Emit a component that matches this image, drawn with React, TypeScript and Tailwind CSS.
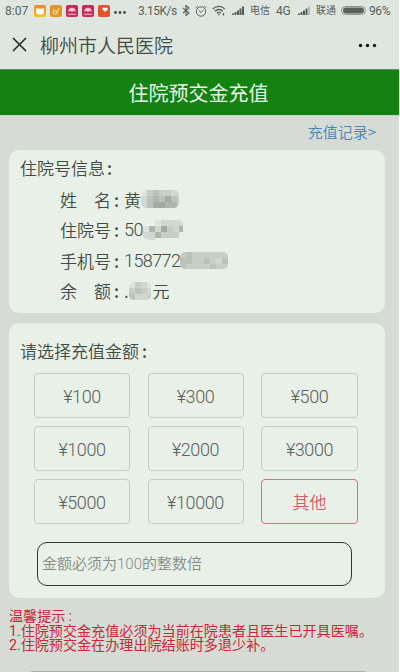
import type { ReactNode } from "react"

const amounts = ["¥100", "¥300", "¥500", "¥1000", "¥2000", "¥3000", "¥5000", "¥10000", "其他"]

// opacity of every mosaic cell, one string per row, 0 = clear
const masks = {
  name: { cells: ["1343322", "2454643", "2466553", "1343332"], size: 6, w: 38, h: 18 },
  number: { cells: ["0012222", "1526325", "2253330", "1200000"], size: 6, w: 40, h: 20 },
  phone: { cells: ["34333333", "44334324", "43333433"], size: 6, w: 48, h: 17 },
  balance: { cells: ["1321", "3432", "4223"], size: 6, w: 22, h: 18 },
}

function Mosaic({ kind }: { kind: keyof typeof masks }) {
  const { cells, size, w, h } = masks[kind]
  return (
    <svg width={w} height={h} className="rounded-[5px] shrink-0">
      {cells.flatMap((row, y) =>
        row.split("").map((c, x) => (
          <rect key={`${x}-${y}`} x={x * size} y={y * size} width={size} height={size} fill="#667169" opacity={Number(c) * 0.09} />
        ))
      )}
    </svg>
  )
}

function AppIcon({ className, children }: { className: string; children: ReactNode }) {
  return (
    <span className={`w-[12px] h-[12px] rounded-[2px] ${className}`}>
      <svg viewBox="0 0 11 11" width="12" height="12" fill="#fff">{children}</svg>
    </span>
  )
}

function Signal({ last }: { last: string }) {
  return (
    <svg width="12" height="9" viewBox="0 0 12 9" fill="#58605a">
      <path d="M0 7.500h2V9H0zM2.500 6h2v3h-2zM5 4.500h2V9H5zM7.500 2.500h2V9h-2z" />
      <path d="M10 .5h2V9h-2z" fill={last} />
    </svg>
  )
}

function StatusBar() {
  return (
    <div className="h-5 pt-px flex items-center text-[12px] text-[#59615b] leading-5">
      <span className="ml-[5px] w-[29px]">8:07</span>
      <div className="flex items-center gap-[4px]">
        <AppIcon className="bg-linear-to-b from-[#f4822b] to-[#fbc01c]"><path d="M2 2.500l2 1h3l2-1v4C9 8.200 7.500 9 5.500 9S2 8.200 2 6.500z" /></AppIcon>
        <AppIcon className="bg-[#df9627]"><path d="M3 5.500a2 2 0 1 0 3.500 0M3 4l3 2.500L8.500 3" fill="none" stroke="#f6dfa5" /></AppIcon>
        <AppIcon className="bg-[#c62c59]"><path d="M2 6c0-4.500 7-4.500 7 0L7 5.500 5.500 6.500 4 5.500zM2 8h7v1H2z" fill="#f2c3d0" /></AppIcon>
        <AppIcon className="bg-[#c62c59]"><path d="M2 6c0-4.500 7-4.500 7 0L7 5.500 5.500 6.500 4 5.500zM2 8h7v1H2z" fill="#f2c3d0" /></AppIcon>
        <AppIcon className="bg-[#e2532b]"><path d="M6.500 6.500L4 4c0-2 2-2 2.500-1C7 2 9 2 9 4z" /></AppIcon>
      </div>
      <svg width="12" height="3" className="ml-[4px] mt-1" fill="#454c47">
        <circle cx="1.500" cy="1.500" r="1.400" /><circle cx="6" cy="1.500" r="1.400" /><circle cx="10.500" cy="1.500" r="1.400" />
      </svg>
      <span className="ml-[12px] w-[40px] whitespace-nowrap tracking-[-0.5px]">3.15K/s</span>
      <svg width="8" height="11" viewBox="0 0 8 11" className="ml-[4px]" fill="none" stroke="#58605a" strokeWidth="1.100">
        <path d="M1 3l6 5-3 2.500v-10L7 3 1 8" />
      </svg>
      <svg width="12" height="12" viewBox="0 0 12 12" className="ml-[5px]" fill="none" stroke="#58605a">
        <circle cx="6" cy="6.500" r="4.700" /><path d="M3.700 5.500L6 7.500 8.500 5M.7 2.800L2.800 1M11.300 2.800L9.200 1" />
      </svg>
      <svg width="14" height="11" viewBox="0 0 14 11" className="ml-[5px]" fill="none" stroke="#58605a" strokeWidth="1.300">
        <path d="M.8 4c3.500-3.500 8.500-3.500 12 0M2.800 6.200c2.300-2.300 5.700-2.300 8 0M4.800 8.300c1.200-1.200 2.900-1.200 4 0" />
        <path d="M6 9.600h1.500M11.500 8v2.500" />
      </svg>
      <div className="ml-[6px]"><Signal last="#58605a" /></div>
      <span className="ml-[6px] mt-px text-[10px] leading-none w-[20px]">电信</span>
      <span className="ml-[6px] w-[16px] text-[12px] tracking-[-0.2px]">4G</span>
      <div className="ml-[6px]"><Signal last="#b5bdb6" /></div>
      <span className="ml-[6px] mt-px text-[10px] leading-none w-[20px]">联通</span>
      <svg width="25" height="9" viewBox="0 0 25 9" className="ml-[5px]">
        <rect x=".5" y=".5" width="24" height="8" rx="4" fill="none" stroke="#8d958f" />
        <rect x="2" y="1.500" width="21" height="6" rx="3" fill="#59615b" />
      </svg>
      <span className="ml-[3px] tracking-[-0.4px]">96%</span>
    </div>
  )
}

function InfoRow({ label, children }: { label: string; children: ReactNode }) {
  return (
    <div className="flex items-center h-[30.500px]">
      <span className="w-[51px] flex justify-between">
        {label.split("").map((c) => <span key={c}>{c}</span>)}
      </span>
      <span className="w-[13px] pl-[3px] font-medium">:</span>
      {children}
    </div>
  )
}

function Digits({ children }: { children: ReactNode }) {
  return <span className="font-['Roboto',sans-serif] text-[18px] tracking-[-0.6px]">{children}</span>
}

export default function App() {
  return (
    <div className="w-[399px] h-[672px] overflow-hidden bg-[#d6dcd5] text-[#414a43] font-['Roboto','Noto_Sans_CJK_SC',sans-serif]">
      <header className="h-[69px] bg-[#dfe6df]">
        <StatusBar />
        <div className="h-[49px] flex items-center pl-[12px] pr-[22px]">
          <svg width="15" height="15" viewBox="0 0 15 15" stroke="#202521" strokeWidth="1.500">
            <path d="M1 1l13 13M14 1L1 14" />
          </svg>
          <h1 className="ml-[13px] text-[19px] font-['Noto_Sans_CJK_SC',sans-serif] font-[350] leading-none">柳州市人民医院</h1>
          <svg width="19" height="5" className="mt-px ml-auto" fill="#151815">
            <circle cx="2.500" cy="2.500" r="1.700" /><circle cx="9.500" cy="2.500" r="1.700" /><circle cx="16.500" cy="2.500" r="1.700" />
          </svg>
        </div>
      </header>

      <div className="h-[47px] pr-[2px] bg-[#148213] border-t border-t-[#5f8b60] border-b border-b-[#c3dcbf] text-[#eaf5e7] text-[20px] flex items-center justify-center font-['Noto_Sans_CJK_SC',sans-serif] font-normal">
        住院预交金充值
      </div>

      <main className="font-['Noto_Sans_CJK_SC',sans-serif] font-[350]">
        <div className="h-[34px] pb-[2px] flex items-center justify-end pr-[23px] text-[15px] text-[#4187bd]">充值记录&gt;</div>

        <section className="mx-[9px] w-[376px] h-[163px] rounded-[10px] bg-[#e9f0e8] text-[17px] pl-[11px] pt-[2px]">
          <div className="h-[32px] flex items-center">住院号信息<span className="ml-[2px] font-medium">:</span></div>
          <div className="pl-[40px]">
            <InfoRow label="姓名">黄<Mosaic kind="name" /></InfoRow>
            <InfoRow label="住院号"><Digits>50</Digits><Mosaic kind="number" /></InfoRow>
            <InfoRow label="手机号"><Digits>158772</Digits><Mosaic kind="phone" /></InfoRow>
            <InfoRow label="余额">.<Mosaic kind="balance" /><span className="ml-[2px]">元</span></InfoRow>
          </div>
        </section>

        <section className="mx-[9px] mt-[10px] w-[376px] h-[275px] rounded-[10px] bg-[#e9f0e8] px-[25px] pt-[12px]">
          <div className="-ml-[14px] h-[32px] flex items-center text-[17px]">
            请选择充值金额<span className="ml-[3px] font-medium">:</span>
          </div>
          <div className="mt-[6px] grid grid-cols-[96px_96px_97px] gap-x-[17.500px] gap-y-[8px]">
            {amounts.map((amount) => (
              <button
                key={amount}
                className={`h-[45px] rounded-[4px] border ${
                  amount === "其他"
                    ? "border-[#d8717a] text-[#d25e69] text-[17px]"
                    : "border-[#c5ccc5] text-[#59615b] text-[18px] tracking-[-0.4px] pt-[2px] font-['Roboto',sans-serif] font-light"
                }`}
              >
                {amount}
              </button>
            ))}
          </div>
          <input
            className="block mt-[18px] ml-[3px] w-[315px] h-[44px] rounded-[10px] border-[1.500px] border-[#2f3731] px-[4px] text-[15px] font-['Roboto','Noto_Sans_CJK_SC',sans-serif] font-[350] placeholder:text-[#848c85] outline-none"
            placeholder="金额必须为100的整数倍"
          />
        </section>

        <div className="mt-[11px] ml-[9px] text-[14.100px] leading-[14.500px] text-[#ca2635] font-normal whitespace-nowrap font-['Roboto','Noto_Sans_CJK_SC',sans-serif]">
          <p>温馨提示<span className="ml-[3px]">:</span></p>
          <p>1.住院预交金充值必须为当前在院患者且医生已开具医嘱。</p>
          <p>2.住院预交金在办理出院结账时多退少补。</p>
        </div>
        <div className="mt-[18px] ml-[29px] w-[338px] h-[4px] rounded-t bg-[#c5ccc5] border-t border-[#a9b1aa]" />
      </main>
    </div>
  )
}
